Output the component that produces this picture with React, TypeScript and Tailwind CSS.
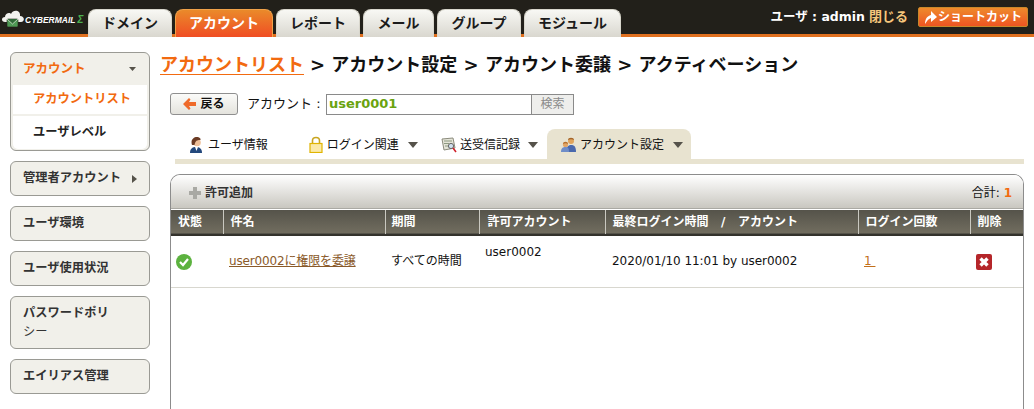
import React from "react";

const FONT = { fontFamily: '"DejaVu Sans", "Noto Sans CJK JP", sans-serif' };

function Logo() {
  return (
    <svg width="24" height="20" viewBox="0 0 24 20" className="shrink-0">
      <path d="M4 13 C0 13 0 8 4 8 C4 4 9 3 10 5 C12 0 20 1 19 7 C24 7 24 13 20 13 Z" fill="#f2f2ee" />
      <rect x="6" y="10" width="11" height="8" rx="1" fill="#4f9a55" stroke="#22201a" strokeWidth="0.6" />
      <path d="M6 10 L11.5 15 L17 10" fill="#2f6a37" stroke="#e8f0e0" strokeWidth="0.7" />
    </svg>
  );
}

function TopTab({ label, active, w }: { label: string; active?: boolean; w: string }) {
  return (
    <div
      className={`${w} flex h-[28px] items-center justify-center rounded-t-[8px] border-x border-t text-[14px] font-bold ${
        active
          ? "border-[#f0a24a] bg-[linear-gradient(180deg,#ea8a2a,#f04d24)] text-white"
          : "border-[#d8d6cc] bg-[linear-gradient(180deg,#f8f8f4,#d9d7cf)] text-[#1b1b1b]"
      }`}
    >
      {label}
    </div>
  );
}

function Caret({ color = "#55524a" }: { color?: string }) {
  return (
    <svg width="10" height="6" viewBox="0 0 10 6" className="shrink-0">
      <path d="M0 0 H10 L5 6 Z" fill={color} />
    </svg>
  );
}

function SideItem({ label, children }: { label?: string; children?: React.ReactNode }) {
  return (
    <div className="flex min-h-[35px] items-center rounded-[6px] border border-[#9a9a94] bg-[#f1f0ea] pl-[12px] pr-[10px] text-[12.25px] font-bold text-[#333]">
      {label}
      {children}
    </div>
  );
}

function UserIcon() {
  return (
    <svg width="15" height="16" viewBox="0 0 15 16" className="shrink-0">
      <path d="M1 16 C1 11 4 10 7 10 C10 10 13 11 13 16 Z" fill="#23487c" />
      <path d="M6 10 L9 10 L7.5 14 Z" fill="#fff" />
      <circle cx="8" cy="5.5" r="3.8" fill="#eebf99" />
      <path d="M3 8 C1 2 6 -1 10 0.5 C12 1.5 12 3 11 3 C8 3 6.5 3.5 5.5 8 Z" fill="#6b3b24" />
    </svg>
  );
}

function LockIcon() {
  return (
    <svg width="14" height="17" viewBox="0 0 14 17" className="shrink-0">
      <path d="M3.5 8 V4.5 C3.5 0.5 10.5 0.5 10.5 4.5 V8" fill="none" stroke="#c9a520" strokeWidth="1.6" />
      <rect x="1" y="7.5" width="12" height="9" fill="#fbe9a8" stroke="#e0b400" strokeWidth="1.2" />
    </svg>
  );
}

function LogIcon() {
  return (
    <svg width="16" height="16" viewBox="0 0 16 16" className="shrink-0">
      <path d="M1 2 L12 1 L14 11 L3 13 Z" fill="#e4e4d8" stroke="#8b8b7c" />
      <path d="M3 4 H11 M3 6.5 H8 M4 9 H8" stroke="#8d9a80" strokeWidth="1" />
      <circle cx="10" cy="9" r="2.6" fill="#cfe0ee" stroke="#666" />
      <path d="M12 11 L15 15" stroke="#d0202a" strokeWidth="1.6" />
    </svg>
  );
}

function GroupIcon() {
  return (
    <svg width="15" height="15" viewBox="0 0 15 15" className="shrink-0">
      <circle cx="10" cy="4" r="3" fill="#e0a45c" />
      <path d="M7 3 C7 0 13 0 13 3 C11 2 9 2 7 3 Z" fill="#a3642a" />
      <path d="M5 15 C5 9 8 8 10 8 C13 8 15 9 15 15 Z" fill="#4a69ad" />
      <circle cx="4.5" cy="7.5" r="2.6" fill="#e2a564" />
      <path d="M2 7 C2 4 7 4 7 7 C5 6 4 6 2 7 Z" fill="#b5702e" />
      <path d="M0 15 C0 11 2 10 4.5 10 C7 10 8 11 8 15 Z" fill="#6f8dc8" />
    </svg>
  );
}

export default function App() {
  return (
    <div className="h-[409px] w-[1034px] overflow-hidden bg-white text-[12px] text-[#111]" style={FONT}>
      {/* top bar */}
      <header className="flex h-[37px] items-end border-b-[3px] border-[#e0701f] bg-[#22201a]">
        <div className="flex h-[34px] w-[88px] items-center pl-[1px] pt-[4px]">
          <Logo />
          <span className="flex items-baseline font-['Liberation_Sans'] text-[8.5px] font-bold italic text-white">
            CYBERMAIL<span className="ml-[2px] text-[10px] text-[#4cb050]">Σ</span>
          </span>
        </div>
        <nav className="-mb-[3px] flex gap-[3px]">
          <TopTab label="ドメイン" w="w-[84px]" />
          <TopTab label="アカウント" active w="w-[98px]" />
          <TopTab label="レポート" w="w-[84px]" />
          <TopTab label="メール" w="w-[71px]" />
          <TopTab label="グループ" w="w-[84px]" />
          <TopTab label="モジュール" w="w-[97px]" />
        </nav>
        <div className="ml-auto flex h-[34px] items-center pr-[6px]">
          <span className="text-[12.5px] font-bold text-white">ユーザ : admin</span>
          <span className="ml-[4px] text-[13px] font-bold text-[#f6c67c]">閉じる</span>
          <div className="ml-[10px] flex h-[20px] w-[110px] items-center justify-center gap-[1px] rounded-[2px] border border-[#c8882a] bg-[linear-gradient(180deg,#ee8a2c,#ee5522)] text-[12px] font-bold text-white">
            <svg width="13" height="13" viewBox="0 0 13 13" className="shrink-0">
              <path d="M1 13 C1 8 3 5 7 4 V0 L13 6 L7 11 V7 C4 8 3 10 1 13 Z" fill="#fff" />
            </svg>
            ショートカット
          </div>
        </div>
      </header>

      <div className="flex">
        {/* sidebar */}
        <aside className="ml-[10px] mt-[15px] flex w-[140px] shrink-0 flex-col gap-[10px]">
          <div className="flex h-[99px] flex-col rounded-[6px] border border-[#9a9a94] bg-[#f1f0ea] px-[2px] pb-[1px]">
            <div className="flex h-[32px] shrink-0 items-center justify-between pl-[10px] pr-[11px] text-[12.5px] font-bold text-[#f26a10]">
              アカウント
              <svg width="7" height="4" viewBox="0 0 7 4" className="shrink-0">
                <path d="M0 0 H7 L3.5 4 Z" fill="#55524a" />
              </svg>
            </div>
            <div className="flex h-[29px] shrink-0 items-center bg-white pl-[20px] text-[12.25px] font-bold text-[#f26a10]">
              アカウントリスト
            </div>
            <div className="mt-[2px] flex flex-1 items-center rounded-b-[5px] bg-white pl-[20px] text-[12.25px] font-bold text-[#222]">
              ユーザレベル
            </div>
          </div>
          <SideItem>
            管理者アカウント
            <svg width="5" height="8" viewBox="0 0 5 8" className="ml-[11px]">
              <path d="M0 0 L5 4 L0 8 Z" fill="#55524a" />
            </svg>
          </SideItem>
          <SideItem label="ユーザ環境" />
          <SideItem label="ユーザ使用状況" />
          <div className="h-[53px] rounded-[6px] border border-[#9a9a94] bg-[#f1f0ea] pl-[12px] pr-[20px] pt-[7px] text-[12.25px] font-bold leading-[19px] text-[#333]">
            パスワードポリ
            <br />
            <span className="font-normal">シー</span>
          </div>
          <SideItem label="エイリアス管理" />
        </aside>

        {/* main */}
        <main className="ml-[10px] min-w-0 flex-1">
          <h1 className="mt-[15px] flex h-[24px] items-center whitespace-nowrap text-[18px] font-bold text-[#111]">
            <a className="text-[#f26a10] underline underline-offset-[3px]">アカウントリスト</a>
            <span className="ml-[6px]">&gt; アカウント設定 &gt; アカウント委譲 &gt; アクティベーション</span>
          </h1>

          <div className="ml-[10px] mt-[17px] flex items-center">
            <button className="flex h-[22px] w-[68px] items-center justify-center gap-[4px] rounded-[3px] border border-[#8f8f8f] bg-[linear-gradient(180deg,#fbfbf9,#e4e3dd)] text-[12px] font-bold">
              <svg width="13" height="12" viewBox="0 0 13 12">
                <path d="M0 6 L6 0 L7.5 1.5 L6 4 H13 V8 H6 L7.5 10.5 L6 12 Z" fill="#ef6a2a" />
              </svg>
              戻る
            </button>
            <span className="ml-[9px] w-[79px] whitespace-nowrap text-[13px]">アカウント :</span>
            <div className="flex h-[21px] w-[206px] items-center border border-[#8a8a8a] bg-white pl-[2px] text-[13px] font-bold text-[#6aa30f]">
              user0001
            </div>
            <div className="-ml-[1px] flex h-[21px] w-[43px] items-center justify-center border border-[#8a8a8a] bg-[#eeeeec] text-[12px] text-[#8a8a8a]">
              検索
            </div>
          </div>

          {/* sub tabs */}
          <div className="ml-[15px] mr-[10px] mt-[14px] flex h-[35px] items-stretch border-b-[5px] border-[#e8e3d0] pt-[1px]">
            <div className="flex w-[265px] items-center">
              <div className="ml-[14px] flex items-center gap-[4px]">
                <UserIcon />
                ユーザ情報
              </div>
              <div className="ml-[41px] flex items-center gap-[4px]">
                <LockIcon />
                ログイン関連
                <span className="ml-[5px]"><Caret /></span>
              </div>
            </div>
            <div className="ml-[1px] flex items-center gap-[3px]">
              <LogIcon />
              送受信記録
              <span className="ml-[5px]"><Caret /></span>
            </div>
            <div className="-mt-[1px] ml-[9px] flex w-[144px] items-center gap-[4px] rounded-t-[8px] bg-[#e8e3d0] pl-[14px] pt-[1px]">
              <GroupIcon />
              アカウント設定
              <span className="ml-[5px]"><Caret /></span>
            </div>
          </div>

          {/* list panel */}
          <section className="ml-[10px] mt-[10px] h-[300px] w-[854px] rounded-t-[10px] border border-b-0 border-[#8c8c8c]">
            <div className="flex h-[34px] items-center justify-between rounded-t-[9px] border-b border-[#aaa9a3] bg-[linear-gradient(180deg,#ffffff,#c9c7c0)] pl-[18px] pr-[11px] pt-[2px]">
              <div className="flex items-center gap-[4px] font-bold text-[#333]">
                <svg width="12" height="12" viewBox="0 0 12 12">
                  <path d="M4 0 H8 V4 H12 V8 H8 V12 H4 V8 H0 V4 H4 Z" fill="#a9a9a4" />
                </svg>
                許可追加
              </div>
              <div>
                合計: <span className="font-bold text-[#f26a10]">1</span>
              </div>
            </div>
            <table className="mt-[1px] w-full table-fixed border-collapse">
              <thead>
                <tr className="h-[25px] border-b-2 border-[#33322c] bg-[linear-gradient(180deg,#55534a,#716d5f)] text-left text-[12px] font-bold text-white">
                  <th className="w-[52px] pl-[7px]">状態</th>
                  <th className="w-[162px] border-l border-[#c9c8c0] pl-[7px]">件名</th>
                  <th className="w-[94px] border-l border-[#c9c8c0] pl-[6px]">期間</th>
                  <th className="w-[126px] border-l border-[#c9c8c0] pl-[8px]">許可アカウント</th>
                  <th className="w-[253px] border-l border-[#c9c8c0] pl-[7px] whitespace-pre">最終ログイン時間   /   アカウント</th>
                  <th className="w-[112px] border-l border-[#c9c8c0] pl-[7px]">ログイン回数</th>
                  <th className="border-l border-[#c9c8c0] pl-[7px]">削除</th>
                </tr>
              </thead>
              <tbody>
                <tr className="h-[52px] border-b border-[#d8d7cf]">
                  <td className="pl-[5px]">
                    <svg width="16" height="16" viewBox="0 0 16 16" className="mt-[1px]">
                      <circle cx="8" cy="8" r="8" fill="#5cb23f" />
                      <path d="M4 8 L7 11 L12 5" fill="none" stroke="#fff" strokeWidth="2.2" />
                    </svg>
                  </td>
                  <td className="pl-[6px] tracking-[-0.15px]">
                    <a className="text-[#8a5a2a] underline">user0002に権限を委譲</a>
                  </td>
                  <td className="pl-[6px]">すべての時間</td>
                  <td className="pb-[18px] pl-[6px]">user0002</td>
                  <td className="pl-[7px] whitespace-nowrap tracking-[-0.05px]">2020/01/10 11:01 by user0002</td>
                  <td className="pl-[6px]">
                    <a className="whitespace-pre text-[#c2701c] underline">1 </a>
                  </td>
                  <td className="pl-[6px]">
                    <svg width="16" height="16" viewBox="0 0 16 16" className="mt-[2px]">
                      <rect width="16" height="16" rx="2" fill="#b5262a" />
                      <path d="M4.5 4.5 L11.5 11.5 M11.5 4.5 L4.5 11.5" stroke="#fff" strokeWidth="3.4" />
                    </svg>
                  </td>
                </tr>
              </tbody>
            </table>
          </section>
        </main>
      </div>
    </div>
  );
}
